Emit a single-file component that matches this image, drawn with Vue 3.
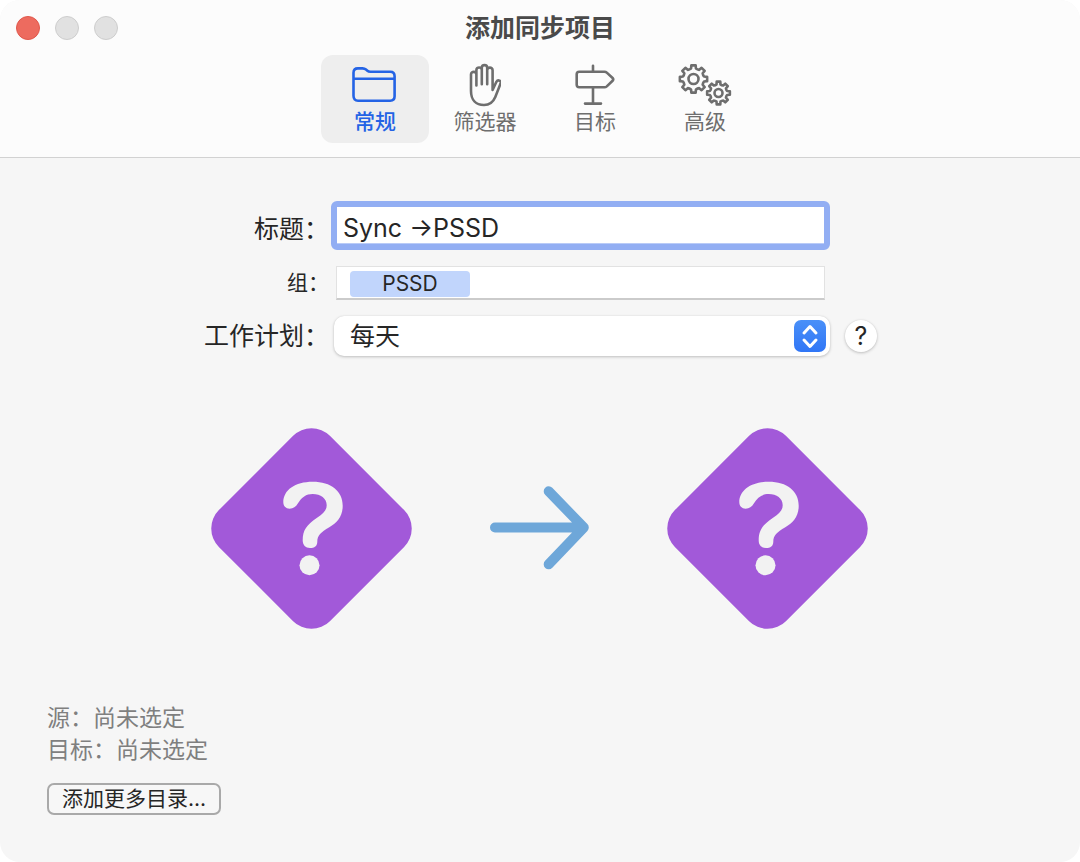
<template>
  <div class="window">
    <header class="toolbar">
      <div class="titlebar">
        <div class="lights">
          <button class="light close" type="button" aria-label="关闭"></button>
          <button class="light" type="button" aria-label="最小化" disabled></button>
          <button class="light" type="button" aria-label="缩放" disabled></button>
        </div>
        <h1>添加同步项目</h1>
      </div>
      <nav class="tabs">
        <button
          v-for="tab in tabs"
          :key="tab.id"
          type="button"
          class="tab"
          :class="{ active: tab.id === activeTab }"
          @click="activeTab = tab.id"
        >
          <span class="tab-icon">
            <svg v-if="tab.id === 'general'" width="48" height="38" viewBox="0 0 48 38">
              <path d="M2.5 29.7V6.8Q2.5 2.4 6.9 2.4H11.5Q13.6 2.4 15 3.6L16.4 4.8Q17.5 5.8 19.5 5.8H39.2Q43.6 5.8 43.6 10.2V30.3Q43.6 34.7 39.2 34.7H7Q2.5 34.7 2.5 29.7ZM2.5 12.8H43.6" />
            </svg>
            <svg v-else-if="tab.id === 'filter'" width="32" height="44" viewBox="0 0 32 44">
              <path d="M7.4 22.5V11.4C7.4 8 2 8 2 11.4V28C2 36.8 7 42 15 42C20.8 42 24.2 39 26.3 34L31.6 20.6C32.6 17.7 29 16 27.4 18.8L23.6 27V7.2C23.6 3.8 18.2 3.8 18.2 7.2M7.4 12V7C7.4 3.6 12.8 3.6 12.8 7V21.3M12.8 7V4.7C12.8 1.3 18.2 1.3 18.2 4.7V21.3" />
            </svg>
            <svg v-else-if="tab.id === 'target'" width="42" height="42" viewBox="0 0 42 42">
              <path d="M19 1.8V7.7M5.2 7.7H30.4Q31.8 7.7 32.8 8.6L38.6 14Q39.9 15.4 38.6 16.8L32.8 22.4Q31.8 23.3 30.4 23.3H5.2Q2.7 23.3 2.7 20.8V10.2Q2.7 7.7 5.2 7.7ZM19 23.3V39.6M11 39.6H27" />
            </svg>
            <svg v-else width="56" height="44" viewBox="0 0 56 44">
              <path :d="gearPath(16.5, 16, 10.8, 13.8)" />
              <circle cx="16.5" cy="16" r="5" />
              <path :d="gearPath(41.5, 30, 8.8, 11.5)" />
              <circle cx="41.5" cy="30" r="4" />
            </svg>
          </span>
          <span class="tab-label">{{ tab.label }}</span>
        </button>
      </nav>
    </header>

    <main>
      <form class="fields" @submit.prevent>
        <label class="title-label" for="title">标题：</label>
        <input id="title" v-model="title" class="title-input" type="text" />

        <label class="group-label" for="group">组：</label>
        <div class="group-field">
          <span class="token">PSSD</span>
          <input id="group" v-model="group" type="text" />
        </div>

        <label for="schedule">工作计划：</label>
        <div class="select-wrap">
          <select id="schedule" v-model="schedule">
            <option v-for="option in schedules" :key="option">{{ option }}</option>
          </select>
          <svg class="stepper" width="32" height="32" viewBox="0 0 32 32">
            <path d="M10 13L16 6.5L22 13M10 20L16 26.5L22 20" />
          </svg>
        </div>
        <button class="help" type="button">?</button>
      </form>

      <section class="route">
        <svg class="place" width="202" height="202" viewBox="0 0 202 202">
          <rect x="22" y="22" width="157" height="157" rx="26" transform="rotate(45 100.5 100.5)" />
          <path :d="questionMark" />
          <circle cx="98.5" cy="137.3" r="10" />
        </svg>
        <svg class="arrow" width="100" height="86" viewBox="0 0 100 86">
          <path d="M5 41.5H92M58.7 5.3L93.8 41.5L58.7 78.3" />
        </svg>
        <svg class="place" width="202" height="202" viewBox="0 0 202 202">
          <rect x="22" y="22" width="157" height="157" rx="26" transform="rotate(45 100.5 100.5)" />
          <path :d="questionMark" />
          <circle cx="98.5" cy="137.3" r="10" />
        </svg>
      </section>

      <footer>
        <p>源：尚未选定</p>
        <p>目标：尚未选定</p>
        <button class="add" type="button">添加更多目录...</button>
      </footer>
    </main>
  </div>
</template>

<script setup>
import { ref } from 'vue';

const tabs = [
  { id: 'general', label: '常规' },
  { id: 'filter', label: '筛选器' },
  { id: 'target', label: '目标' },
  { id: 'advanced', label: '高级' },
];
const schedules = ['每天', '每周', '每月'];

const activeTab = ref('general');
const title = ref('Sync →PSSD');
const group = ref('');
const schedule = ref('每天');

const questionMark =
  'M72.3 74.3C72.3 62 84 53.7 101.7 53.7C120 53.7 131.7 63 131.7 77.7' +
  'C131.7 88.7 126.3 94.3 118.3 99.3C109.7 104.3 106.3 107.7 106.3 113.7' +
  'C106.3 118 103.5 120 99 120C94.5 120 91.7 117 91.7 112.5' +
  'C91.7 102 95.7 97 105.7 90C112.3 85.7 115.7 82.3 115.7 77.3' +
  'C115.7 70.3 109.7 66 101.7 66C95 66 90.7 69.3 87 75.3' +
  'C84.7 79 82.3 80.7 78.7 80.7C74.7 80.7 72.3 78 72.3 74.3Z';

// outline of a gear with eight teeth
function gearPath(cx, cy, root, outer) {
  const point = (r, deg) => {
    const a = (deg * Math.PI) / 180;
    return `${(cx + r * Math.sin(a)).toFixed(2)} ${(cy - r * Math.cos(a)).toFixed(2)}`;
  };
  let d = '';
  for (let i = 0; i < 8; i++) {
    const a = i * 45;
    d += `${i ? 'L' : 'M'}${point(root, a - 13)}L${point(outer, a - 9)}`;
    d += `L${point(outer, a + 9)}L${point(root, a + 13)}`;
    d += `Q${point(root - 0.6, a + 22.5)} ${point(root, a + 32)}`;
  }
  return d + 'Z';
}
</script>

<style>
body {
  margin: 0;
  background: #fff;
}
</style>

<style scoped>
.window {
  min-height: 100vh;
  box-sizing: border-box;
  border-radius: 20px;
  overflow: hidden;
  background: #f6f6f6;
  color: #262626;
  font-family: Inter, "Noto Sans CJK SC", sans-serif;
}

button,
input,
select {
  font-family: inherit;
  color: inherit;
  box-sizing: border-box;
  margin: 0;
}

.toolbar {
  background: #fcfcfc;
  border-bottom: 1px solid #d2d2d2;
  padding-bottom: 14px;
}

.titlebar {
  display: grid;
  grid-template-columns: 1fr auto 1fr;
  align-items: center;
  height: 55px;
}

.lights {
  display: flex;
  gap: 15px;
  padding-left: 16px;
}

.light {
  width: 24px;
  height: 24px;
  padding: 0;
  border: 1px solid #cdcdcd;
  border-radius: 50%;
  background: #e1e1e1;
}

.light.close {
  background: #ed6b5f;
  border-color: #e0584c;
}

h1 {
  margin: 0;
  font-size: 25px;
  line-height: 36px;
  font-weight: 700;
  color: #4a4a4a;
}

.tabs {
  display: flex;
  justify-content: center;
  gap: 2px;
}

.tab {
  display: flex;
  flex-direction: column;
  align-items: center;
  width: 108px;
  padding: 8px 0 6px;
  border: 0;
  border-radius: 12px;
  background: none;
  color: #6e6e6e;
}

.tab.active {
  background: #eee;
  color: #2463e5;
}

.tab-icon {
  display: flex;
  align-items: center;
  height: 44px;
}

.tab-icon svg {
  fill: none;
  stroke: currentColor;
  stroke-width: 2.6;
  stroke-linecap: round;
  stroke-linejoin: round;
}

.tab-label {
  font-size: 21px;
  line-height: 30px;
}

.tab.active .tab-label {
  font-weight: 500;
}

.fields {
  display: grid;
  grid-template-columns: 331px minmax(0, 1fr) 250px;
  row-gap: 16px;
  align-items: center;
  padding-top: 43px;
}

.fields label {
  grid-column: 1;
  justify-self: end;
  padding-right: 2px;
  font-size: 25px;
  line-height: 34px;
}

.fields .title-label {
  padding-top: 6px;
}

.fields .group-label {
  font-size: 21px;
}

.title-input {
  width: 100%;
  height: 49px;
  padding: 4px 6px 0;
  border: 6px solid #92aef3;
  border-radius: 6px;
  background: #fff;
  box-shadow: inset 0 -1px 0 #b9cbf7;
  font-size: 25px;
  outline: none;
}

.group-field {
  display: flex;
  align-items: center;
  height: 34px;
  box-sizing: border-box;
  margin: 0 5px;
  padding: 2px 13px 0;
  border: 1px solid #e2e2e2;
  border-bottom: 2px solid #cbcbcb;
  background: #fff;
}

.token {
  width: 120px;
  border-radius: 4px;
  background: #c1d5fc;
  font-size: 21px;
  line-height: 26px;
  text-align: center;
}

.group-field input {
  flex: 1;
  min-width: 0;
  padding: 0 6px;
  border: 0;
  background: none;
  font-size: 21px;
  outline: none;
}

.select-wrap {
  position: relative;
  margin-left: 3px;
}

select {
  display: block;
  width: 100%;
  height: 40px;
  padding: 0 48px 0 16px;
  border: 0;
  border-radius: 10px;
  appearance: none;
  background: #fff;
  box-shadow: 0 0 1px #cfcfcf, 0 1px 3px #bdbdbd;
  font-size: 25px;
}

.stepper {
  position: absolute;
  top: 4px;
  right: 4px;
  border-radius: 7px;
  background: linear-gradient(#4a90f8, #3076f6);
  fill: none;
  stroke: #fff;
  stroke-width: 3;
  stroke-linecap: round;
  stroke-linejoin: round;
  pointer-events: none;
}

.help {
  width: 32px;
  height: 32px;
  margin-left: 15px;
  padding: 0;
  border: 0;
  border-radius: 50%;
  background: #fff;
  box-shadow: 0 0 1px #cfcfcf, 0 1px 3px #bdbdbd;
  font-size: 25px;
  line-height: 32px;
}

.route {
  display: flex;
  justify-content: center;
  align-items: center;
  gap: 77px;
  padding-top: 72px;
}

.place {
  fill: #f2f2f2;
}

.place rect {
  fill: #a259d9;
}

.arrow {
  fill: none;
  stroke: #6ea7d9;
  stroke-width: 10;
  stroke-linecap: round;
  stroke-linejoin: round;
}

footer {
  padding: 72px 47px 47px;
}

footer p {
  margin: 0;
  font-size: 23px;
  line-height: 32px;
  color: #7f7f7f;
}

.add {
  height: 32px;
  margin-top: 17px;
  padding: 0 13px;
  border: 2px solid #a9a9a9;
  border-radius: 7px;
  background: #f7f7f7;
  font-size: 21px;
  line-height: 28px;
}
</style>
